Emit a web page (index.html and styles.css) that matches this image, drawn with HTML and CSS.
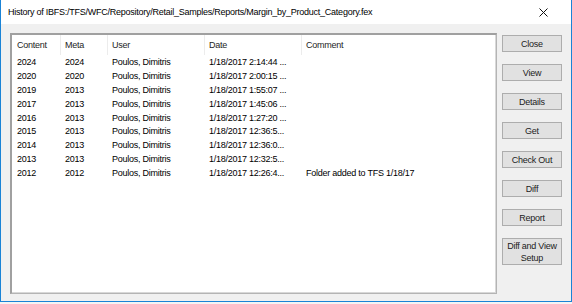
FILE: index.html
```html
<!DOCTYPE html>
<html>
<head>
<meta charset="utf-8">
<link rel="stylesheet" href="styles.css">
</head>
<body>
<div class="window">
  <div class="titlebar">
    <span class="title">History of IBFS:/TFS/WFC/Repository/Retail_Samples/Reports/Margin_by_Product_Category.fex</span>
    <svg class="close-x" width="9" height="9" viewBox="0 0 9 9"><path d="M0.5 0.5 L8.5 8.5 M8.5 0.5 L0.5 8.5" stroke="#111" stroke-width="1" fill="none"/></svg>
  </div>
  <div class="body">
    <div class="listbox">
      <div class="row header">
        <div class="c1">Content</div>
        <div class="c2">Meta</div>
        <div class="c3">User</div>
        <div class="c4">Date</div>
        <div class="c5">Comment</div>
      </div>
      <div class="row"><div class="c1">2024</div><div class="c2">2024</div><div class="c3">Poulos, Dimitris</div><div class="c4">1/18/2017 2:14:44 ...</div><div class="c5"></div></div>
      <div class="row"><div class="c1">2020</div><div class="c2">2020</div><div class="c3">Poulos, Dimitris</div><div class="c4">1/18/2017 2:00:15 ...</div><div class="c5"></div></div>
      <div class="row"><div class="c1">2019</div><div class="c2">2013</div><div class="c3">Poulos, Dimitris</div><div class="c4">1/18/2017 1:55:07 ...</div><div class="c5"></div></div>
      <div class="row"><div class="c1">2017</div><div class="c2">2013</div><div class="c3">Poulos, Dimitris</div><div class="c4">1/18/2017 1:45:06 ...</div><div class="c5"></div></div>
      <div class="row"><div class="c1">2016</div><div class="c2">2013</div><div class="c3">Poulos, Dimitris</div><div class="c4">1/18/2017 1:27:20 ...</div><div class="c5"></div></div>
      <div class="row"><div class="c1">2015</div><div class="c2">2013</div><div class="c3">Poulos, Dimitris</div><div class="c4">1/18/2017 12:36:5...</div><div class="c5"></div></div>
      <div class="row"><div class="c1">2014</div><div class="c2">2013</div><div class="c3">Poulos, Dimitris</div><div class="c4">1/18/2017 12:36:0...</div><div class="c5"></div></div>
      <div class="row"><div class="c1">2013</div><div class="c2">2013</div><div class="c3">Poulos, Dimitris</div><div class="c4">1/18/2017 12:32:5...</div><div class="c5"></div></div>
      <div class="row"><div class="c1">2012</div><div class="c2">2012</div><div class="c3">Poulos, Dimitris</div><div class="c4">1/18/2017 12:26:4...</div><div class="c5">Folder added to TFS 1/18/17</div></div>
    </div>
    <div class="buttons">
      <button class="btn">Close</button>
      <button class="btn">View</button>
      <button class="btn">Details</button>
      <button class="btn">Get</button>
      <button class="btn">Check Out</button>
      <button class="btn">Diff</button>
      <button class="btn">Report</button>
      <button class="btn tall">Diff and View<br>Setup</button>
    </div>
  </div>
</div>
</body>
</html>
```

FILE: styles.css
```css
* { box-sizing: border-box; }
html, body { margin: 0; padding: 0; background: #f4f4f4; }
body {
  font-family: "Liberation Sans", Arial, sans-serif;
  font-size: 9px;
  letter-spacing: -0.25px;
  color: #000;
}
.window {
  width: 572px;
  height: 302px;
  border: 1px solid #1a83d6;
  border-top: none;
  background: #f0f0f0;
  display: flex;
  flex-direction: column;
}
.titlebar {
  height: 24px;
  background: #fff;
  display: flex;
  align-items: center;
  justify-content: space-between;
  padding: 0 23px 0 7px;
}
.title { font-size: 9px; color: #000; }
.close-x { display: block; }
.body {
  flex: 1;
  display: flex;
  padding: 9px 9px 7px 9px;
  gap: 5px;
}
.listbox {
  width: 487px;
  height: 261px;
  background: #fff;
  border: 1px solid #a0a0a0;
  border-left-width: 2px;
  border-top-width: 2px;
  border-right-color: #b4b4b4;
  border-bottom-color: #b4b4b4;
  box-shadow: inset -1px -1px 0 #d8d8d8;
}
.row {
  display: flex;
  height: 13.8px;
  align-items: center;
  line-height: 13px;
  white-space: nowrap;
}
.row.header {
  height: 20px;
  margin-bottom: 1px;
  color: #1e1e1e;
}
.row > div { padding-left: 5px; overflow: hidden; }
.c1 { width: 48px; }
.c2 { width: 47px; }
.c3 { width: 97px; }
.c4 { width: 97px; }
.c5 { flex: 1; }
.header > div { height: 20px; line-height: 20px; border-left: 1px solid #ececec; padding-left: 4px; }
.header > .c1 { border-left: none; padding-left: 5px; }
.buttons {
  display: flex;
  flex-direction: column;
  gap: 12px;
  padding-top: 2px;
}
.btn {
  width: 60px;
  height: 17px;
  padding: 0;
  margin: 0;
  background: #e1e1e1;
  border: 1px solid #adadad;
  font-family: inherit;
  font-size: 9px;
  letter-spacing: -0.25px;
  color: #222;
  line-height: 12px;
}
.btn.tall { height: 27px; }
```
